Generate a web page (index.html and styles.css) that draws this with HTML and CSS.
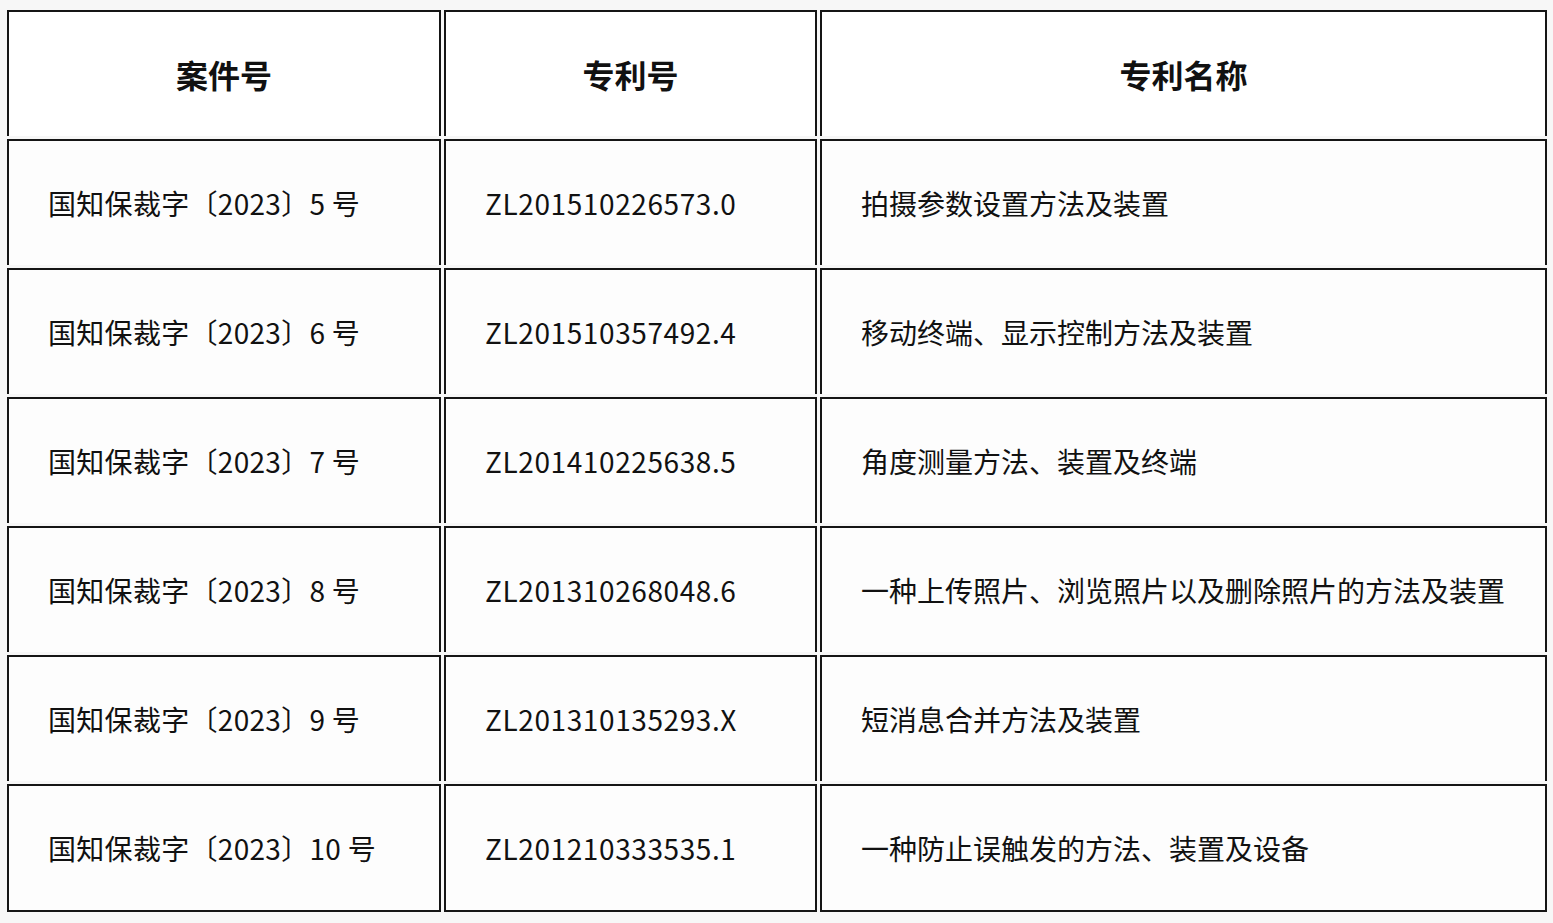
FILE: index.html
```html
<!DOCTYPE html>
<html lang="zh-CN">
<head>
<meta charset="utf-8">
<title>专利列表</title>
<link rel="stylesheet" href="styles.css">
</head>
<body>
<table class="patents">
  <colgroup>
    <col class="c1">
    <col class="c2">
    <col class="c3">
  </colgroup>
  <thead>
    <tr>
      <th>案件号</th>
      <th>专利号</th>
      <th>专利名称</th>
    </tr>
  </thead>
  <tbody>
    <tr><td class="case">国知保裁字〔2023〕5 号</td><td class="num">ZL201510226573.0</td><td>拍摄参数设置方法及装置</td></tr>
    <tr><td class="case">国知保裁字〔2023〕6 号</td><td class="num">ZL201510357492.4</td><td>移动终端、显示控制方法及装置</td></tr>
    <tr><td class="case">国知保裁字〔2023〕7 号</td><td class="num">ZL201410225638.5</td><td>角度测量方法、装置及终端</td></tr>
    <tr><td class="case">国知保裁字〔2023〕8 号</td><td class="num">ZL201310268048.6</td><td>一种上传照片、浏览照片以及删除照片的方法及装置</td></tr>
    <tr><td class="case">国知保裁字〔2023〕9 号</td><td class="num">ZL201310135293.X</td><td>短消息合并方法及装置</td></tr>
    <tr class="last"><td class="case">国知保裁字〔2023〕10 号</td><td class="num">ZL201210333535.1</td><td>一种防止误触发的方法、装置及设备</td></tr>
  </tbody>
</table>
</body>
</html>
```

FILE: styles.css
```css
html, body {
  margin: 0;
  padding: 0;
  background: #f7f7f7;
}

body {
  font-family: "Noto Sans CJK SC", "Noto Sans", sans-serif;
  color: #111;
}

.patents {
  table-layout: fixed;
  border-collapse: separate;
  border-spacing: 3px;
  width: 1546px;
  margin: 7px 0 0 4px;
}

.patents col.c1 { width: 434px; }
.patents col.c2 { width: 373px; }
.patents col.c3 { width: 727px; }

.patents th,
.patents td {
  box-sizing: border-box;
  height: 126px;
  border-top: 2px solid #151515;
  border-left: 2px solid #151515;
  border-right: 2px solid #151515;
  vertical-align: middle;
  white-space: nowrap;
}

.patents th {
  background: #ffffff;
  font-size: 32px;
  font-weight: 700;
  text-align: center;
  padding: 0;
}

.patents td {
  background: #fdfdfd;
  font-size: 28px;
  font-weight: 400;
  text-align: left;
  padding: 0 0 0 39px;
}

.patents td.case {
  letter-spacing: 0.3px;
}

.patents td.num {
  letter-spacing: 0.6px;
}

.patents tr.last td {
  height: 128px;
  border-bottom: 2px solid #151515;
}
```
